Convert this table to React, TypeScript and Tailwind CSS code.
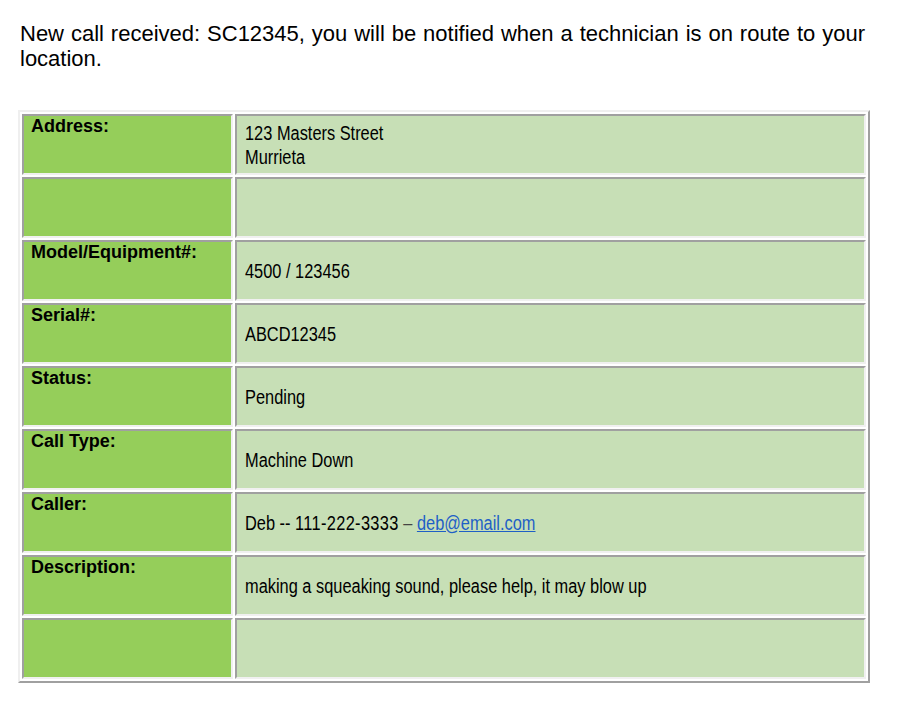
const rows: { label: string; value?: React.ReactNode }[] = [
  {
    label: "Address:",
    value: (
      <>
        123 Masters Street
        <br />
        Murrieta
      </>
    ),
  },
  { label: "" },
  { label: "Model/Equipment#:", value: "4500 / 123456" },
  { label: "Serial#:", value: "ABCD12345" },
  { label: "Status:", value: "Pending" },
  { label: "Call Type:", value: "Machine Down" },
  {
    label: "Caller:",
    value: (
      <>
        Deb -- <span className="tracking-[0.4px]">111-222-3333</span> <span className="text-[#444]">–</span>{" "}
        <a href="#" className="text-[#1f5fc6] underline">
          deb@email.com
        </a>
      </>
    ),
  },
  { label: "Description:", value: "making a squeaking sound, please help, it may blow up" },
  { label: "" },
];

export default function App() {
  return (
    <div className="min-h-[720px] bg-white pt-[21px] font-['Liberation_Sans',Arial,sans-serif] text-black">
      {/* Confirmation message */}
      <p className="ml-[20px] w-[845px] text-justify text-[22px] leading-[25px]">
        New call received: SC12345, you will be notified when a technician is on route to your location.
      </p>

      {/* Call details table */}
      <div className="mt-[39px] ml-[18px] grid w-[852px] grid-cols-[211px_631px] gap-[2px] border-2 border-t-[#efefef] border-l-[#efefef] border-r-[#a0a0a0] border-b-[#a0a0a0] p-[2px]">
        {rows.map((r, i) => (
          <Row key={i} label={r.label} value={r.value} />
        ))}
      </div>
    </div>
  );
}

function Row({ label, value }: { label: string; value?: React.ReactNode }) {
  return (
    <>
      <div className="h-[61px] border-2 border-t-[#a0a0a0] border-l-[#a0a0a0] border-r-[#f0f0f0] border-b-[#f0f0f0] bg-[#95ce5a] pl-[7px] text-[18px] leading-[21px] font-bold">
        {label}
      </div>
      <div className="flex h-[61px] items-center overflow-hidden border-2 border-t-[#a0a0a0] border-l-[#a0a0a0] border-r-[#f0f0f0] border-b-[#f0f0f0] bg-[#c7dfb6] pl-[8px] text-[19.5px] leading-[24px]">
        {/* condensed face: no narrow font installed, so squeeze horizontally */}
        <div className="origin-left scale-x-[0.84] whitespace-nowrap">{value}</div>
      </div>
    </>
  );
}
